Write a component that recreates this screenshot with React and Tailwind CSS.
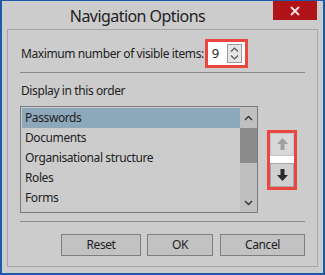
export default function App() {
  const items = ["Passwords", "Documents", "Organisational structure", "Roles", "Forms"];
  return (
    <div className="w-[325px] h-[275px] bg-[#cccccc] border-l-2 border-r-2 border-t border-b-2 border-[#1a5aa8] flex flex-col text-[#1e1e1e] tracking-[-0.4px]" style={{ fontFamily: '"Segoe UI", "Noto Sans", sans-serif' }}>
      <div className="h-[28px] flex shrink-0">
        <div className="flex-1 flex items-center justify-center">
          <span className="text-[16px] leading-none mt-[2px] tracking-[-0.55px]">Navigation Options</span>
        </div>
        <div className="w-[44px] h-[19px] mr-[6px] bg-[#b01318] flex items-center justify-center">
          <svg width="10" height="10" viewBox="0 0 10 10">
            <path d="M1 1L9 9M9 1L1 9" stroke="#f2e4e4" strokeWidth="1.8" />
          </svg>
        </div>
      </div>
      <div className="mx-[5px] h-[238px] border border-[#a6a6a6] flex flex-col px-[12px] shrink-0">
        <div className="flex items-center h-[29px] mt-[9px]">
          <span className="text-[12px] leading-none ml-[1px] mr-[1px]">Maximum number of visible items:</span>
          <div className="w-[43px] h-[29px] border-[3px] border-[#e8463f] bg-white flex items-center">
            <span className="text-[13px] leading-none ml-[4px] w-[15px]">9</span>
            <div className="w-[15px] h-[19px] border border-[#9a9a9a] bg-[#e6e6e6] flex flex-col items-center justify-center gap-[3px]">
              <svg width="9" height="5" viewBox="0 0 9 5"><path d="M1 4.5L4.5 1L8 4.5" stroke="#555" strokeWidth="1.2" fill="none" /></svg>
              <svg width="9" height="5" viewBox="0 0 9 5"><path d="M1 0.5L4.5 4L8 0.5" stroke="#555" strokeWidth="1.2" fill="none" /></svg>
            </div>
          </div>
        </div>
        <div className="h-px bg-[#8a8a8a] mt-[4px]" />
        <div className="text-[12px] leading-none mt-[12px] ml-[1px]">Display in this order</div>
        <div className="flex items-center gap-[9px] mt-[9px]">
          <div className="w-[238px] h-[107px] border border-[#7a7a7a] bg-[#cccccc] flex">
            <div className="flex-1 flex flex-col pt-[1px] pl-[1px]">
              {items.map((t, i) => (
                <div key={t} className={"h-[20px] flex items-center pl-[3px] text-[12px] leading-none " + (i === 0 ? "bg-[#8ea8bb]" : "")}>
                  {t}
                </div>
              ))}
            </div>
            <div className="w-[17px] flex flex-col bg-[#c0c0c0]">
              <div className="h-[21px] flex items-center justify-center">
                <svg width="9" height="6" viewBox="0 0 9 6"><path d="M1 5L4.5 1.5L8 5" stroke="#333" strokeWidth="1.4" fill="none" /></svg>
              </div>
              <div className="h-[35px] bg-[#8c8c8c]" />
              <div className="flex-1" />
              <div className="h-[18px] flex items-center justify-center">
                <svg width="9" height="6" viewBox="0 0 9 6"><path d="M1 1L4.5 4.5L8 1" stroke="#333" strokeWidth="1.4" fill="none" /></svg>
              </div>
            </div>
          </div>
          <div className="w-[30px] h-[60px] border-[3px] border-[#e8463f] bg-white flex flex-col justify-between">
            <div className="h-[23px] bg-[#d8d8d8] border border-[#c4c4c4] flex items-center justify-center">
              <svg width="13" height="14" viewBox="0 0 13 14"><path d="M6.5 1L12 7H8.5V13H4.5V7H1Z" fill="#a0a0a0" /></svg>
            </div>
            <div className="h-[24px] bg-[#cfcfcf] border border-[#a8a8a8] flex items-center justify-center">
              <svg width="13" height="14" viewBox="0 0 13 14"><path d="M6.5 13L12 7H8.5V1H4.5V7H1Z" fill="#2a2a2a" /></svg>
            </div>
          </div>
        </div>
        <div className="h-px bg-[#8a8a8a] mt-[8px]" />
        <div className="flex justify-end gap-[6px] mt-[12px]">
          <button className="w-[80px] h-[22px] bg-[#c2c2c2] border border-[#7f7f7f] text-[12px] leading-none">Reset</button>
          <button className="w-[66px] h-[22px] bg-[#c2c2c2] border border-[#7f7f7f] text-[12px] leading-none">OK</button>
          <button className="w-[85px] h-[22px] bg-[#c2c2c2] border border-[#7f7f7f] text-[12px] leading-none ml-[1px]">Cancel</button>
        </div>
      </div>
    </div>
  );
}
